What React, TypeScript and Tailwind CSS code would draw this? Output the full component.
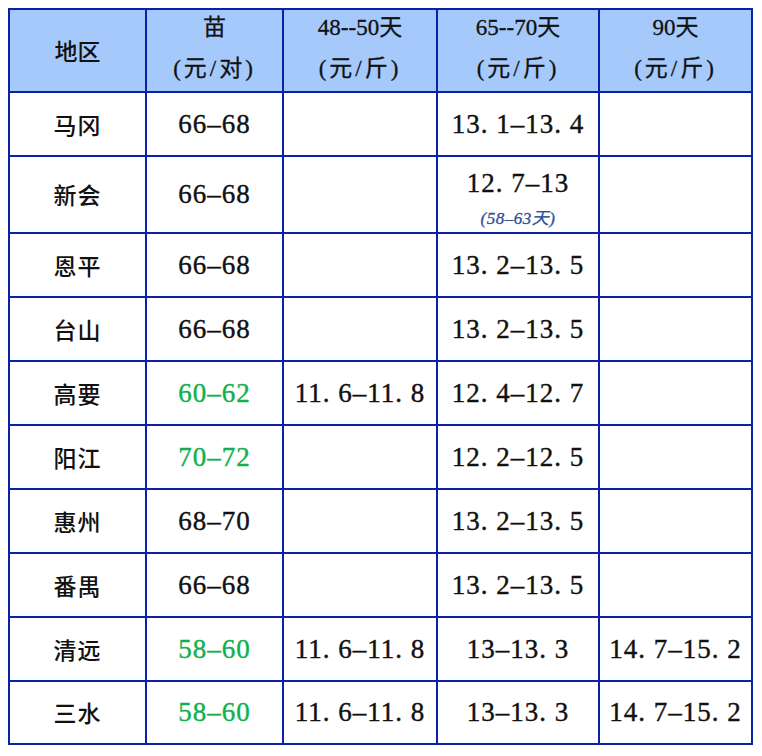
import React from 'react';

type Row = {
  area: string;
  seed: string;
  green?: boolean;
  p48: string;
  p65: string;
  note?: string;
  p90: string;
};

const rows: Row[] = [
  { area: '马冈', seed: '66–68', p48: '', p65: '13. 1–13. 4', p90: '' },
  { area: '新会', seed: '66–68', p48: '', p65: '12. 7–13', note: '(58–63天)', p90: '' },
  { area: '恩平', seed: '66–68', p48: '', p65: '13. 2–13. 5', p90: '' },
  { area: '台山', seed: '66–68', p48: '', p65: '13. 2–13. 5', p90: '' },
  { area: '高要', seed: '60–62', green: true, p48: '11. 6–11. 8', p65: '12. 4–12. 7', p90: '' },
  { area: '阳江', seed: '70–72', green: true, p48: '', p65: '12. 2–12. 5', p90: '' },
  { area: '惠州', seed: '68–70', p48: '', p65: '13. 2–13. 5', p90: '' },
  { area: '番禺', seed: '66–68', p48: '', p65: '13. 2–13. 5', p90: '' },
  { area: '清远', seed: '58–60', green: true, p48: '11. 6–11. 8', p65: '13–13. 3', p90: '14. 7–15. 2' },
  { area: '三水', seed: '58–60', green: true, p48: '11. 6–11. 8', p65: '13–13. 3', p90: '14. 7–15. 2' },
];

function Head({ top, bottom }: { top: string; bottom?: string }) {
  return (
    <div className="bg-[#a6c9fb] flex flex-col items-center justify-center pb-[5px] text-[23px] leading-[41px] text-[#111] font-['Liberation_Serif','Noto_Sans_CJK_SC',serif]">
      <span className="[-webkit-text-stroke:0.3px_currentColor]">{top}</span>
      {bottom && <span className="tracking-[3px] [-webkit-text-stroke:0.3px_currentColor]">{bottom}</span>}
    </div>
  );
}

function Num({ value, green }: { value: string; green?: boolean }) {
  return (
    <div
      className={`bg-white flex items-center justify-center text-[27px] tracking-[1px] [-webkit-text-stroke:0.4px_currentColor] font-['Liberation_Serif',serif] ${
        green ? 'text-[#10b04f]' : 'text-[#111]'
      }`}
    >
      {value}
    </div>
  );
}

export default function App() {
  return (
    <div className="w-[762px] h-[756px] bg-white pt-[8px] pl-[8px]">
      <div className="w-[745px] grid grid-cols-[135px_135px_152px_160px_151px] grid-rows-[81px_62px_75px_62px_62px_62px_62px_62px_62px_62px_61px] gap-[2px] p-[2px] bg-[#0a22a8]">
        <div className="bg-[#a6c9fb] flex items-center justify-center text-[23px] font-medium text-[#111] font-['Noto_Sans_CJK_SC',sans-serif]">
          地区
        </div>
        <Head top="苗" bottom="(元/对)" />
        <Head top="48--50天" bottom="(元/斤)" />
        <Head top="65--70天" bottom="(元/斤)" />
        <Head top="90天" bottom="(元/斤)" />

        {rows.map((r) => (
          <React.Fragment key={r.area}>
            <div className="bg-white flex items-center justify-center text-[23px] font-medium text-[#111] tracking-[1px] font-['Noto_Sans_CJK_SC',sans-serif]">
              {r.area}
            </div>
            <Num value={r.seed} green={r.green} />
            <Num value={r.p48} />
            {r.note ? (
              <div className="bg-white flex flex-col items-center pt-[11px] font-['Liberation_Serif','Noto_Sans_CJK_SC',serif]">
                <span className="text-[27px] leading-[30px] tracking-[1px] text-[#111] [-webkit-text-stroke:0.4px_currentColor]">{r.p65}</span>
                <span className="mt-[11px] text-[17px] italic leading-[20px] tracking-[0.5px] text-[#2c4f9a] [-webkit-text-stroke:0.3px_currentColor]">{r.note}</span>
              </div>
            ) : (
              <Num value={r.p65} />
            )}
            <Num value={r.p90} />
          </React.Fragment>
        ))}
      </div>
    </div>
  );
}
